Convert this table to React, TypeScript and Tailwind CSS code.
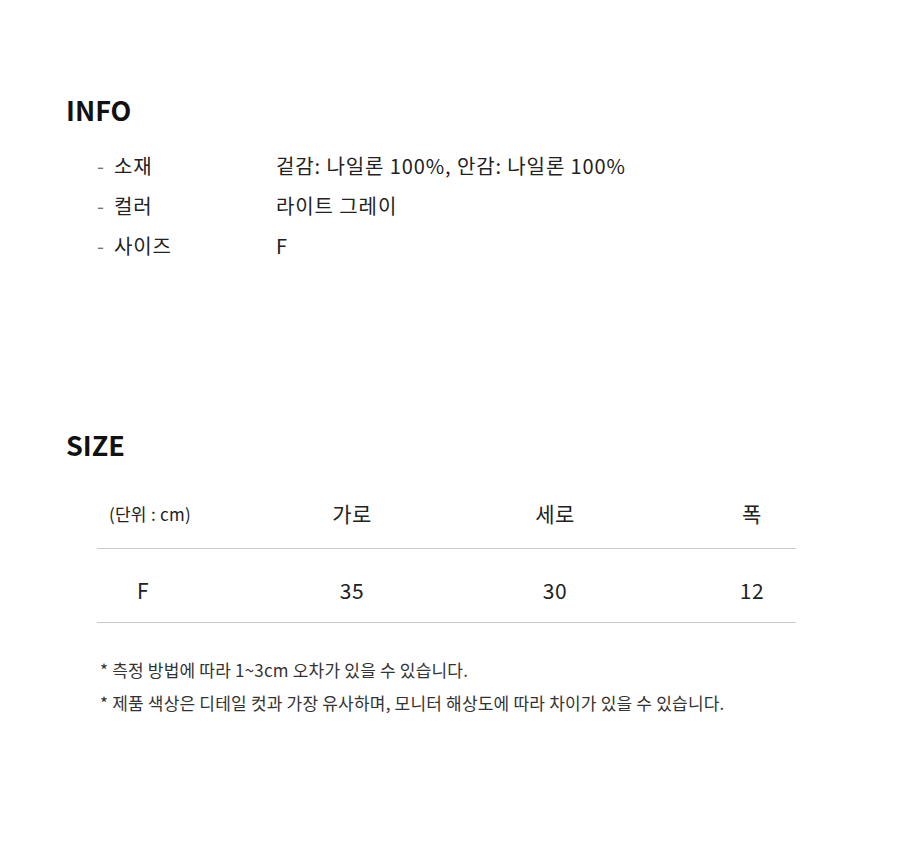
import React from "react";

const font = { fontFamily: '"Noto Sans CJK KR", "Noto Sans", sans-serif' };

const infoRows = [
  { label: "소재", value: "겉감: 나일론 100%, 안감: 나일론 100%" },
  { label: "컬러", value: "라이트 그레이" },
  { label: "사이즈", value: "F" },
];

const sizeHeader = ["(단위 : cm)", "가로", "세로", "폭"];
const sizeRow = ["F", "35", "30", "12"];

const headGap = ["ml-[3px]", "ml-[102px]", "ml-[103px]", "ml-[97px]"];
const rowGap = ["-ml-[4px]", "ml-[109px]", "ml-[103px]", "ml-[97px]"];

const Cells = ({ cells, header }: { cells: string[]; header?: boolean }) => (
  <div
    className={
      "flex items-center border-b border-[#c8c8c8] " +
      (header ? "h-[69px]" : "h-[74px] pt-[10px]")
    }
  >
    {cells.map((c, i) => (
      <div
        key={i}
        className={
          "w-[100px] shrink-0 text-center text-[#222] " +
          (header ? headGap[i] : rowGap[i]) +
          " " +
          (header && i === 0 ? "text-[17px] tracking-[0.3px]" : "text-[21px] tracking-[0.5px]")
        }
      >
        {c}
      </div>
    ))}
  </div>
);

export default function App() {
  return (
    <div className="w-[900px] h-[841px] bg-white" style={font}>
      <div className="pl-[66px] pt-[92px]">
        <h2 className="text-[27px] font-bold text-[#111] leading-[36px]">INFO</h2>
        <div className="mt-[18px] pl-[31px] flex flex-col">
          {infoRows.map((r) => (
            <div key={r.label} className="flex items-center h-[40px] text-[20px] tracking-[0.9px] text-[#222]">
              <span className="w-[17px] text-[#777]">-</span>
              <span className="w-[162px]">{r.label}</span>
              <span>{r.value}</span>
            </div>
          ))}
        </div>

        <h2 className="mt-[161px] text-[27px] font-bold text-[#111] leading-[36px]">SIZE</h2>
        <div className="mt-[17px] ml-[31px] w-[699px]">
          <Cells cells={sizeHeader} header />
          <Cells cells={sizeRow} />
        </div>

        <div className="mt-[34px] pl-[34px] text-[17px] leading-[25px] tracking-[0.2px] text-[#333] flex flex-col gap-[8px]">
          <p>* 측정 방법에 따라 1~3cm 오차가 있을 수 있습니다.</p>
          <p>* 제품 색상은 디테일 컷과 가장 유사하며, 모니터 해상도에 따라 차이가 있을 수 있습니다.</p>
        </div>
      </div>
    </div>
  );
}
